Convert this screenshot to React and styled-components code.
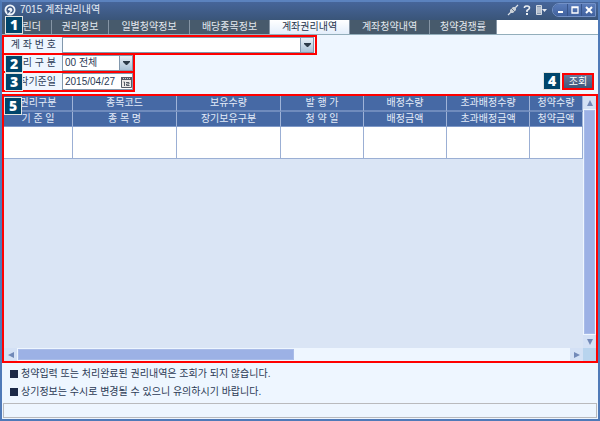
import React from 'react'
import styled, { createGlobalStyle } from 'styled-components'

const GlobalStyle = createGlobalStyle`
  * { box-sizing: border-box; }
  body { margin: 0; }
  body, button, input, select, table {
    font-family: "Liberation Sans", "Noto Sans CJK KR", sans-serif;
    font-size: 10px;
    line-height: 14px;
    color: #2c3a55;
  }
  button { padding: 0; border: 0; background: none; }
  svg { display: block; }
`

const Window = styled.main`
  display: flex;
  flex-direction: column;
  min-height: 100vh;
  border: 2px solid #4f7ab8;
  border-top-color: #5b82be;
  background: #eef6ff;
`
const TitleBar = styled.header`
  display: flex;
  align-items: center;
  height: 18px;
  padding: 0 2px 2px;
  background: linear-gradient(#46659a, #3a5579);
`
const Title = styled.h1`
  flex: 1;
  margin: 0 0 0 4px;
  font-size: 10px;
  font-weight: 400;
  color: #e6ecf5;
`
const TitleTools = styled.div`
  display: flex;
  align-items: center;
  gap: 3px;
  margin-right: 5px;
`
const WindowButtons = styled.div`
  display: flex;
  height: 14px;
  border: 1px solid #7391c6;
  border-radius: 7px 1px 1px 7px;
  overflow: hidden;
`
const WindowButton = styled.button`
  display: grid;
  place-items: center;
  width: 14px;
  background: linear-gradient(#5a7cba, #41629f);

  & + & {
    border-left: 1px solid #38558b;
  }
`
const TabBar = styled.nav`
  position: relative;
  display: flex;
  height: 15px;
  background: #fff;
  border-bottom: 1px solid #93aebb;
`
const Tab = styled.button`
  width: ${props => props.$width}px;
  border-right: 1px solid #8595a5;
  background: ${props => (props.$active ? 'linear-gradient(#fff, #e3eefb)' : '#475a6c')};
  color: ${props => (props.$active ? '#27354d' : '#e3e9ef')};
  white-space: nowrap;

  &:first-of-type {
    padding-right: 10px;
    text-align: right;
  }
`
const SearchPanel = styled.form`
  display: flex;
  justify-content: space-between;
  align-items: flex-end;
  padding-bottom: 2px;
`
const Fields = styled.div`
  display: flex;
  flex-direction: column;
  align-items: flex-start;
`
const Marked = styled.div`
  position: relative;
  display: flex;
  border: 2px solid #f00;
`
const FieldRow = styled(Marked)`
  align-items: center;
  padding-right: 1px;

  & + & {
    margin-top: -2px;
    padding-right: 0;
  }
`
const Badge = styled.span`
  display: grid;
  place-items: center;
  width: 18px;
  height: 18px;
  border: 1px solid #e4e4e0;
  background: #00456b;
  color: #fff;
  font-family: "Open Sans", sans-serif;
  font-size: 14px;
  font-weight: 800;
  line-height: 16px;
`
const CornerBadge = styled(Badge)`
  position: absolute;
  z-index: 2;
  top: ${props => props.$top || 0}px;
  left: ${props => props.$left || 0}px;
`
const FieldLabel = styled.label`
  width: 58px;
  padding-right: 6px;
  text-align: right;
  white-space: nowrap;
`
const SelectBox = styled.div`
  position: relative;
  width: ${props => props.$width}px;
  height: 16px;
`
const Select = styled.select`
  appearance: none;
  display: block;
  width: 100%;
  height: 16px;
  margin: 0;
  padding: 0 16px 0 2px;
  border: 1px solid #8298ad;
  border-radius: 0;
  background: #fff;
`
const SelectArrow = styled.span`
  position: absolute;
  top: 1px;
  right: 1px;
  display: grid;
  place-items: center;
  width: 13px;
  height: 14px;
  border-left: 1px solid #8298ad;
  background: linear-gradient(#e9f1f8, #a9c1d6);
  pointer-events: none;
`
const DateBox = styled.div`
  display: flex;
  align-items: center;
  width: 71px;
  height: 17px;
  border: 1px solid #8298ad;
  background: #fff;
`
const DateInput = styled.input`
  flex: 1;
  min-width: 0;
  padding: 0 0 0 2px;
  border: 0;
  background: none;
`
const Actions = styled.div`
  display: flex;
  align-items: center;
  gap: 1px;
  padding: 0 4px 2px 0;
`
const SearchButton = styled.button`
  width: 28px;
  height: 13px;
  background: linear-gradient(#64799b, #405779);
  color: #fff;
  line-height: 13px;
`
const GridFrame = styled(Marked)`
  flex: 1;
  display: grid;
  grid-template-columns: 1fr 13px;
  grid-template-rows: 1fr 13px;
`
const GridBody = styled.div`
  background: #dae5f5;
`
const Table = styled.table`
  width: 100%;
  table-layout: fixed;
  border-collapse: separate;
  border-spacing: 0;
`
const HeadCell = styled.th`
  height: ${props => (props.$last ? 15 : 16)}px;
  padding: 0;
  border-right: 1px solid #9fb3d8;
  border-bottom: ${props => (props.$last ? '1px solid #7f99c8' : '2px solid #6f8bbd')};
  background: #4669a5;
  color: #e3ebf8;
  font-weight: 400;
  line-height: 14px;
  white-space: nowrap;
`
const Cell = styled.td`
  height: 32px;
  padding: 0;
  border-right: 1px solid #9bafd4;
  border-bottom: 1px solid #9bafd4;
  background: #fff;
`
const ScrollBar = styled.div`
  display: flex;
  flex-direction: ${props => (props.$vertical ? 'column' : 'row')};
  background: #eef6ff;
`
const ScrollButton = styled.button`
  display: grid;
  place-items: center;
  flex: none;
  width: 13px;
  height: 13px;
  background: #d4e1f5;
`
const ScrollTrack = styled.div`
  flex: 1;
  display: flex;
  padding: 1px;
`
const ScrollThumb = styled.div`
  width: ${props => props.$size || '100%'};
  border: 1px solid #a9bce8;
  background: #9cb1e5;
`
const ScrollCorner = styled.div`
  background: #b8d4ee;
`
const Notes = styled.ul`
  margin: 0;
  padding: 2px 8px;
  list-style: none;
`
const Note = styled.li`
  display: flex;
  align-items: center;
  gap: 3px;
  height: 18px;

  &::before {
    content: '';
    width: 8px;
    height: 8px;
    background: #1c2947;
  }
`
const StatusBar = styled.footer`
  height: 15px;
  margin: 0 1px 1px;
  border: 1px solid #b9babd;
`

const tabs = [
  { name: '린더', width: 50 },
  { name: '권리정보', width: 57 },
  { name: '일별청약정보', width: 81 },
  { name: '배당종목정보', width: 80 },
  { name: '계좌권리내역', width: 80, active: true },
  { name: '계좌청약내역', width: 80 },
  { name: '청약경쟁률', width: 67 },
]

const columns = [
  { top: '권리구분', bottom: '기 준 일', width: 69 },
  { top: '종목코드', bottom: '종 목 명', width: 104 },
  { top: '보유수량', bottom: '장기보유구분', width: 104 },
  { top: '발 행 가', bottom: '청 약 일', width: 83 },
  { top: '배정수량', bottom: '배정금액', width: 83 },
  { top: '초과배정수량', bottom: '초과배정금액', width: 83 },
  { top: '청약수량', bottom: '청약금액', width: 53 },
]

const arrows = {
  up: 'M4 1 L7 7 H1 Z',
  down: 'M1 1 H7 L4 7 Z',
  left: 'M1 4 L7 1 V7 Z',
  right: 'M7 4 L1 1 V7 Z',
}

const ScrollArrow = ({ direction, label }) =>
  <ScrollButton type="button" aria-label={label}>
    <svg width="8" height="8"><path d={arrows[direction]} fill="#7189b8" /></svg>
  </ScrollButton>

const DropDown = ({ id, width, children }) =>
  <SelectBox $width={width}>
    <Select id={id}>{children}</Select>
    <SelectArrow>
      <svg width="7" height="5"><path d="M0 0 H7 V1 L4 4 H3 L0 1 Z" fill="#2b3a48" /></svg>
    </SelectArrow>
  </SelectBox>

const LogoIcon = () =>
  <svg width="12" height="12" viewBox="0 0 12 12">
    <circle cx="6" cy="6" r="5.5" fill="#eef3fa" />
    <path d="M3.5 7.5 A3 3 0 1 1 6.5 9" fill="none" stroke="#3c5783" strokeWidth="1.5" />
    <path d="M3 5.5 L6.5 7 L3.5 10 Z" fill="#3c5783" />
  </svg>

const PlugIcon = () =>
  <svg width="12" height="12" viewBox="0 0 12 12">
    <path d="M1 11 L4 8 M8 4 L11 1" stroke="#dde3ea" strokeWidth="1.2" />
    <path d="M3 6 L6 3 H9 V6 L6 9 H3 Z" fill="#c9d0d8" />
    <path d="M4 4 L8 8" stroke="#66758a" />
  </svg>

const HelpIcon = () =>
  <svg width="10" height="12" viewBox="0 0 10 12">
    <path d="M2.5 4 V3 Q3 2 5 2 Q7.5 2 7.5 4 Q7.5 5 5 6.5 V8" fill="none" stroke="#eceff3" strokeWidth="1.6" />
    <path d="M4 9 H6 V11 H4 Z" fill="#eceff3" />
  </svg>

const ListIcon = () =>
  <svg width="12" height="12" viewBox="0 0 12 12">
    <path d="M1.5 1.5 H6.5 V10.5 H1.5 Z" fill="#8596ad" stroke="#d3dae3" />
    <path d="M2 4 H6 M2 6 H6 M2 8 H6" stroke="#e6eaf0" />
    <path d="M7 5 H12 L9.5 8 Z" fill="#e6eaf0" />
  </svg>

const CalendarIcon = () =>
  <svg width="11" height="12" viewBox="0 0 11 12">
    <path d="M0.5 1.5 H10.5 V11.5 H0.5 Z" fill="#eceae8" stroke="#555c66" />
    <path d="M0 1 H11 V4 H0 Z" fill="#555c66" />
    <path d="M2 2.5 H9" stroke="#c8ccd0" strokeDasharray="1 1" />
    <path d="M2.5 6 H3.5 V10 M5 6.5 H8 V8 H5.5 V9.5 H8.5" fill="none" stroke="#555c66" />
  </svg>

const ResultGrid = () =>
  <GridFrame>
    <CornerBadge $top={1}>5</CornerBadge>
    <GridBody>
      <Table>
        <colgroup>
          {columns.map(c => <col key={c.top} style={{ width: c.width }} />)}
        </colgroup>
        <thead>
          <tr>{columns.map(c => <HeadCell key={c.top}>{c.top}</HeadCell>)}</tr>
          <tr>{columns.map(c => <HeadCell key={c.bottom} $last>{c.bottom}</HeadCell>)}</tr>
        </thead>
        <tbody>
          <tr>{columns.map(c => <Cell key={c.top} />)}</tr>
        </tbody>
      </Table>
    </GridBody>
    <ScrollBar $vertical>
      <ScrollArrow direction="up" label="위로" />
      <ScrollTrack><ScrollThumb /></ScrollTrack>
      <ScrollArrow direction="down" label="아래로" />
    </ScrollBar>
    <ScrollBar>
      <ScrollArrow direction="left" label="왼쪽으로" />
      <ScrollTrack><ScrollThumb $size="50%" /></ScrollTrack>
      <ScrollArrow direction="right" label="오른쪽으로" />
    </ScrollBar>
    <ScrollCorner />
  </GridFrame>

const App = () =>
  <Window>
    <GlobalStyle />
    <TitleBar>
      <LogoIcon />
      <Title>7015 계좌권리내역</Title>
      <TitleTools>
        <button type="button" aria-label="연결"><PlugIcon /></button>
        <button type="button" aria-label="도움말"><HelpIcon /></button>
        <button type="button" aria-label="메뉴"><ListIcon /></button>
      </TitleTools>
      <WindowButtons>
        <WindowButton type="button" aria-label="최소화">
          <svg width="8" height="8"><path d="M2 6 H7" stroke="#fff" strokeWidth="2" /></svg>
        </WindowButton>
        <WindowButton type="button" aria-label="최대화">
          <svg width="8" height="8"><path d="M1 1 H7 V7 H1 Z M1 1.5 H7" fill="none" stroke="#fff" strokeWidth="1.3" /></svg>
        </WindowButton>
        <WindowButton type="button" aria-label="닫기">
          <svg width="8" height="8"><path d="M1 1 L7 7 M7 1 L1 7" stroke="#fff" strokeWidth="2" /></svg>
        </WindowButton>
      </WindowButtons>
    </TitleBar>
    <TabBar>
      <CornerBadge $top={-4} $left={3}>1</CornerBadge>
      {tabs.map(tab => <Tab key={tab.name} type="button" $width={tab.width} $active={tab.active}>{tab.name}</Tab>)}
    </TabBar>
    <SearchPanel onSubmit={e => e.preventDefault()}>
      <Fields>
        <FieldRow>
          <FieldLabel htmlFor="account">계 좌 번 호</FieldLabel>
          <DropDown id="account" width={252} />
        </FieldRow>
        <FieldRow>
          <CornerBadge $left={1}>2</CornerBadge>
          <FieldLabel htmlFor="kind">리 구 분</FieldLabel>
          <DropDown id="kind" width={71}><option>00 전체</option></DropDown>
        </FieldRow>
        <FieldRow>
          <CornerBadge $left={1}>3</CornerBadge>
          <FieldLabel htmlFor="start">작기준일</FieldLabel>
          <DateBox>
            <DateInput id="start" defaultValue="2015/04/27" />
            <button type="button" aria-label="달력"><CalendarIcon /></button>
          </DateBox>
        </FieldRow>
      </Fields>
      <Actions>
        <Badge>4</Badge>
        <Marked>
          <SearchButton type="submit">조회</SearchButton>
        </Marked>
      </Actions>
    </SearchPanel>
    <ResultGrid />
    <Notes>
      <Note>청약입력 또는 처리완료된 권리내역은 조회가 되지 않습니다.</Note>
      <Note>상기정보는 수시로 변경될 수 있으니 유의하시기 바랍니다.</Note>
    </Notes>
    <StatusBar />
  </Window>

export default App
